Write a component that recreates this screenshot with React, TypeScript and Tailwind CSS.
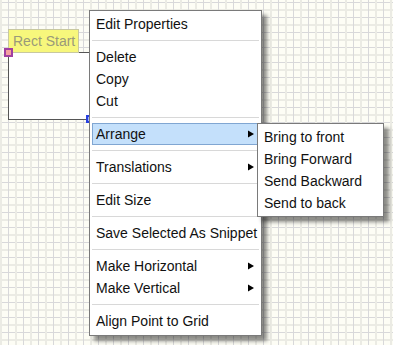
import React from "react";

const Arrow = () => (
  <svg width="6" height="8" viewBox="0 0 6 8" className="shrink-0">
    <polygon points="0,0.5 6,4 0,7.5" fill="#000" />
  </svg>
);

type Item = { label: string; sub?: boolean; active?: boolean } | "sep";

const items: Item[] = [
  { label: "Edit Properties" },
  "sep",
  { label: "Delete" },
  { label: "Copy" },
  { label: "Cut" },
  "sep",
  { label: "Arrange", sub: true, active: true },
  "sep",
  { label: "Translations", sub: true },
  "sep",
  { label: "Edit Size" },
  "sep",
  { label: "Save Selected As Snippet" },
  "sep",
  { label: "Make Horizontal", sub: true },
  { label: "Make Vertical", sub: true },
  "sep",
  { label: "Align Point to Grid" },
];

const subItems = ["Bring to front", "Bring Forward", "Send Backward", "Send to back"];

export default function App() {
  return (
    <div
      className="relative w-[393px] h-[345px] overflow-hidden bg-[#fdfdf5] bg-[image:linear-gradient(to_right,#ebebe4_0px,#ebebe4_2px,transparent_2px,transparent_8px,#d8d8da_8px,#d8d8da_9px,transparent_9px),linear-gradient(to_bottom,#ebebe4_0px,#ebebe4_2px,transparent_2px,transparent_8px,#d8d8da_8px,#d8d8da_9px,transparent_9px)] bg-[size:15px_15px] bg-[position:0_0,0_9px] text-[14px] text-[#111] [font-family:'Liberation_Sans',Arial,sans-serif]"
    >
      {/* Rectangle shape on the canvas */}
      <div className="absolute left-[8px] top-[52px] w-[86px] h-[68px] bg-white border border-[#555]" />
      {/* Label node */}
      <div className="absolute left-[8px] top-[29px] w-[71px] h-[24px] bg-[#f7f77c] border border-[#c8c8a0] flex items-center pl-[4px] text-[#9a9a7a] leading-none">
        Rect Start
      </div>
      {/* Selection handles */}
      <div className="absolute left-[4px] top-[48px] w-[9px] h-[9px] border-2 border-[#a040a0] bg-[#f4a0a0]" />
      <div className="absolute left-[86px] top-[115px] w-[7px] h-[8px] border-2 border-[#2840e0] bg-[#9db0ff]" />

      {/* Context menu */}
      <div className="absolute left-[89px] top-[10px] w-[173px] bg-white border border-[#7a7a7a] pt-[2px] pb-[3px] shadow-[5px_5px_4px_rgba(0,0,0,0.45)] flex flex-col">
        {items.map((it, i) =>
          it === "sep" ? (
            <div key={i} className="h-[11px] mx-[2px] flex items-center">
              <div className="h-px w-full bg-[#d8d8d8]" />
            </div>
          ) : (
            <div
              key={i}
              className={`h-[22px] mx-[2px] flex items-center justify-between pl-[3px] pr-[4px] border whitespace-nowrap ${
                it.active ? "bg-[#c4e0fb] border-[#80a6d2]" : "border-transparent"
              }`}
            >
              <span>{it.label}</span>
              {it.sub && <Arrow />}
            </div>
          )
        )}
      </div>

      {/* Submenu */}
      <div className="absolute left-[257px] top-[123px] w-[127px] bg-white border border-[#7a7a7a] py-[2px] shadow-[5px_5px_4px_rgba(0,0,0,0.45)] flex flex-col">
        {subItems.map((s) => (
          <div key={s} className="h-[22px] mx-[2px] pl-[4px] flex items-center whitespace-nowrap">
            {s}
          </div>
        ))}
      </div>
    </div>
  );
}
